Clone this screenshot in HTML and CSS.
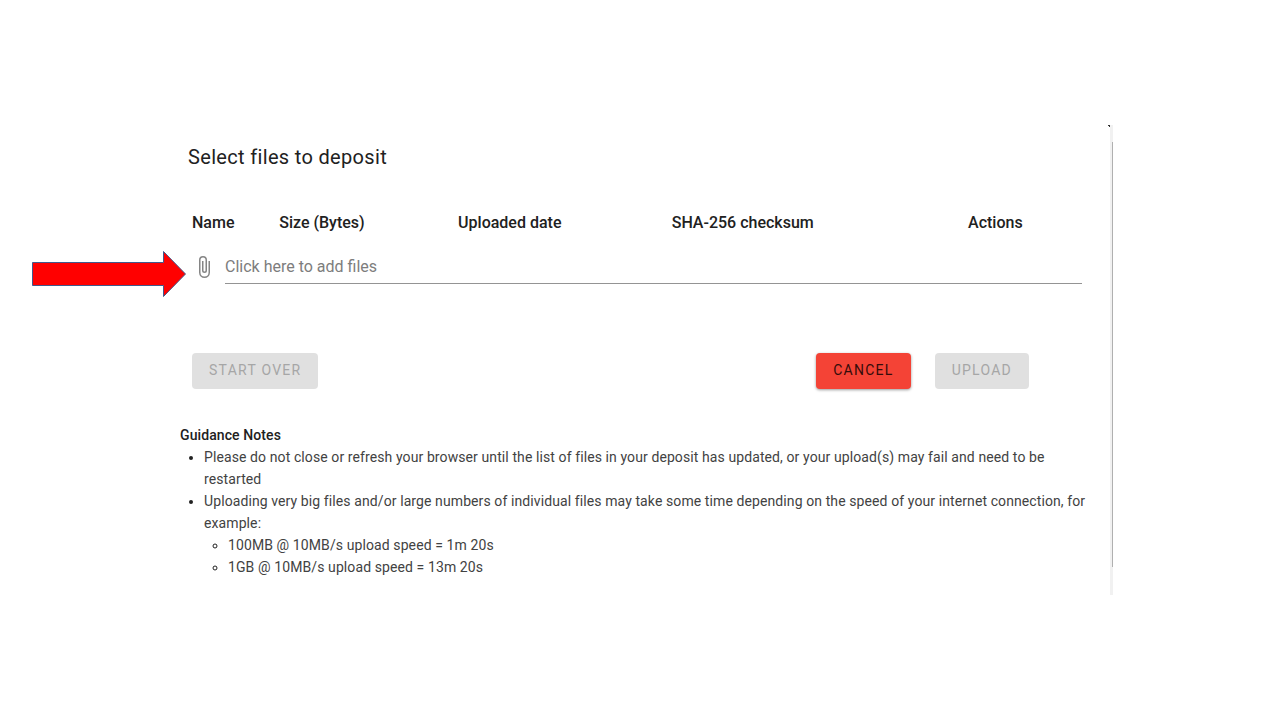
FILE: index.html
```html
<!DOCTYPE html>
<html lang="en">
    <head>
        <meta charset="utf-8">
        <link rel="stylesheet" href="styles.css">
        <title>Select files to deposit</title>
    </head>
    <body>
        <main class="dialog">
            <div class="content">
                <h1>Select files to deposit</h1>

                <div class="files">
                    <table>
                        <thead>
                            <tr>
                                <th class="name">Name</th>
                                <th class="size">Size (Bytes)</th>
                                <th class="date">Uploaded date</th>
                                <th class="checksum">SHA-256 checksum</th>
                                <th>Actions</th>
                            </tr>
                        </thead>
                    </table>

                    <div class="picker">
                        <svg class="arrow" viewBox="0 0 154 46" aria-hidden="true">
                            <path d="M0.5 11.5H131.5V0.5L153.5 23L131.5 45.5V34.5H0.5Z"/>
                        </svg>
                        <label for="field-files">
                            <svg class="clip" viewBox="0 0 24 24" aria-hidden="true">
                                <path d="M16.5,6V17.5A4,4 0 0,1 12.5,21.5A4,4 0 0,1 8.5,17.5V5A2.5,2.5 0 0,1 11,2.5A2.5,2.5 0 0,1 13.5,5V15.5A1,1 0 0,1 12.5,16.5A1,1 0 0,1 11.5,15.5V6H10V15.5A2.5,2.5 0 0,0 12.5,18A2.5,2.5 0 0,0 15,15.5V5A4,4 0 0,0 11,1A4,4 0 0,0 7,5V17.5A5.5,5.5 0 0,0 12.5,23A5.5,5.5 0 0,0 18,17.5V6H16.5Z"/>
                            </svg>
                        </label>
                        <input type="text" id="field-files" aria-label="Add files" placeholder="Click here to add files">
                    </div>

                    <div class="actions">
                        <button type="button" class="start-over" disabled>START OVER</button>
                        <button type="button" class="cancel">CANCEL</button>
                        <button type="button" disabled>UPLOAD</button>
                    </div>
                </div>

                <section class="notes">
                    <h2>Guidance Notes</h2>
                    <ul>
                        <li>Please do not close or refresh your browser until the list of files in your deposit has updated, or your upload(s) may fail and need to be restarted</li>
                        <li>Uploading very big files and/or large numbers of individual files may take some time depending on the speed of your internet connection, for example:
                            <ul>
                                <li>100MB @ 10MB/s upload speed = 1m 20s</li>
                                <li>1GB @ 10MB/s upload speed = 13m 20s</li>
                            </ul>
                        </li>
                    </ul>
                </section>
            </div>
            <div class="scrollbar"><div class="thumb"></div></div>
        </main>
    </body>
</html>
```

FILE: styles.css
```css
body {
    margin: 0;
    background-color: #ffffff;
    color: #212121;
    font-family: Roboto, sans-serif;
}

.dialog {
    display: flex;
    margin: 125px 167px 0 180px;
}

.content {
    flex: 1;
    padding: 16px 20px 17px 0;
}

h1 {
    margin: 0 0 34px 8px;
    font-size: 20px;
    line-height: 32px;
    font-weight: 400;
    letter-spacing: 0.0165em;
}

.files {
    margin: 0 8px 0 12px;
}

table {
    width: 100%;
    table-layout: fixed;
    border-collapse: collapse;
}

th {
    padding: 0;
    font-size: 16px;
    line-height: 32px;
    font-weight: 500;
    text-align: left;
}

.name {
    width: 9.8%;
}

.size {
    width: 20.1%;
}

.date {
    width: 24%;
}

.checksum {
    width: 33.3%;
}

.picker {
    position: relative;
    display: flex;
    align-items: flex-start;
    gap: 9px;
    margin-top: 12px;
}

.arrow {
    position: absolute;
    top: 0;
    right: calc(100% + 6px);
    width: 154px;
    height: 46px;
    fill: #ff0000;
    stroke: #41598c;
}

.clip {
    display: block;
    width: 24px;
    height: 24px;
    margin-top: 4px;
    fill: #858585;
}

input {
    flex: 1;
    height: 33px;
    padding: 0 0 1px;
    box-sizing: border-box;
    border: none;
    border-bottom: 1px solid #949494;
    background: none;
    font-family: inherit;
    font-size: 16px;
    color: inherit;
    outline: none;
}

input::placeholder {
    color: #7d7d7d;
}

.actions {
    display: flex;
    gap: 24px;
    margin: 69px 53px 0 0;
}

.start-over {
    margin-right: auto;
}

button {
    height: 36px;
    padding: 0 17px 2px;
    border: none;
    border-radius: 4px;
    background-color: #e0e0e0;
    font-family: inherit;
    font-size: 14px;
    font-weight: 400;
    letter-spacing: 0.09em;
    color: #a6a6a6;
}

.cancel {
    background-color: #f44336;
    box-shadow: 0 1px 3px rgba(0, 0, 0, 0.4);
    color: #350c0a;
    cursor: pointer;
}

.notes {
    margin-top: 35px;
    font-size: 14px;
    line-height: 22px;
    letter-spacing: 0.007em;
    color: #424242;
}

h2 {
    margin: 0;
    font-size: 14px;
    font-weight: 500;
    color: #212121;
}

ul {
    margin: 0;
    padding-left: 24px;
}

li::marker {
    color: #212121;
}

.scrollbar {
    position: relative;
    width: 3px;
    padding: 17px 0 28px;
    box-sizing: border-box;
    background-color: #f1f1f1;
}

/* corner of the window behind the dialog */
.scrollbar::before {
    content: "";
    position: absolute;
    top: 0;
    right: 100%;
    width: 2px;
    height: 2px;
    background: linear-gradient(to top right, transparent 40%, #333333 50%);
}

.thumb {
    height: 100%;
    border-right: 1px solid #b0b0b0;
}
```
